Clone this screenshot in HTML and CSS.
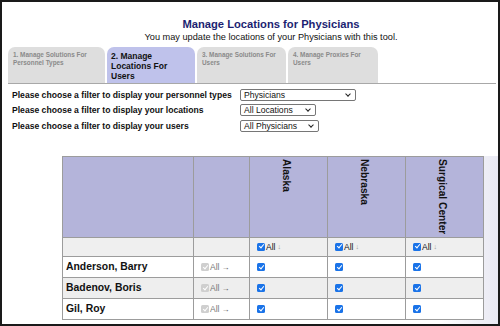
FILE: index.html
```html
<!DOCTYPE html>
<html>
<head>
<meta charset="utf-8">
<link rel="stylesheet" href="styles.css">
</head>
<body>
<div class="frame">
  <div class="header">
    <h1 class="title">Manage Locations for Physicians</h1>
    <p class="subtitle">You may update the locations of your Physicians with this tool.</p>
  </div>
  <div class="tabs">
    <div class="tab t1">1. Manage Solutions For Personnel Types</div>
    <div class="tab t2 active">2. Manage Locations For Users</div>
    <div class="tab t3">3. Manage Solutions For Users</div>
    <div class="tab t4">4. Manage Proxies For Users</div>
  </div>
  <div class="filters">
    <div class="frow"><span class="flabel">Please choose a filter to display your personnel types</span><span class="sel w1">Physicians<i class="chev"></i></span></div>
    <div class="frow"><span class="flabel">Please choose a filter to display your locations</span><span class="sel w2">All Locations<i class="chev"></i></span></div>
    <div class="frow"><span class="flabel">Please choose a filter to display your users</span><span class="sel w3">All Physicians<i class="chev"></i></span></div>
  </div>
  <div class="area">
    <table class="grid">
      <colgroup><col class="c-name"><col class="c-all"><col class="c-loc"><col class="c-loc"><col class="c-loc"></colgroup>
      <tr class="head">
        <th></th><th></th>
        <th><span class="vt">Alaska</span></th>
        <th><span class="vt">Nebraska</span></th>
        <th><span class="vt">Surgical Center</span></th>
      </tr>
      <tr class="allrow">
        <td></td><td></td>
        <td><span class="cb"></span><span class="alltxt">All</span><span class="darr">↓</span></td>
        <td><span class="cb"></span><span class="alltxt">All</span><span class="darr">↓</span></td>
        <td><span class="cb"></span><span class="alltxt">All</span><span class="darr">↓</span></td>
      </tr>
      <tr class="row odd">
        <td class="name">Anderson, Barry</td>
        <td class="rall"><span class="cb dis"></span><span class="alltxt g">All</span><span class="rarr">→</span></td>
        <td><span class="cb"></span></td><td><span class="cb"></span></td><td><span class="cb"></span></td>
      </tr>
      <tr class="row even">
        <td class="name">Badenov, Boris</td>
        <td class="rall"><span class="cb dis"></span><span class="alltxt g">All</span><span class="rarr">→</span></td>
        <td><span class="cb"></span></td><td><span class="cb"></span></td><td><span class="cb"></span></td>
      </tr>
      <tr class="row odd">
        <td class="name">Gil, Roy</td>
        <td class="rall"><span class="cb dis"></span><span class="alltxt g">All</span><span class="rarr">→</span></td>
        <td><span class="cb"></span></td><td><span class="cb"></span></td><td><span class="cb"></span></td>
      </tr>
    </table>
  </div>
</div>
</body>
</html>
```

FILE: styles.css
```css
html, body { margin: 0; padding: 0; }
body { font-family: "Liberation Sans", Arial, sans-serif; background: #fff; }
.frame {
  width: 500px; height: 326px; box-sizing: border-box;
  border: 2px solid #1a1a1a; overflow: hidden;
  background: #fff; position: relative;
}
.header { text-align: center; padding-top: 16px; margin-left: 42px; }
.title { margin: 0; font-size: 11.2px; font-weight: bold; color: #1c1f72; line-height: 13px; }
.subtitle { margin: 1px 0 0; font-size: 9.2px; color: #111; line-height: 11px; }
.tabs {
  display: flex; margin: 3.5px 2px 0 6px; height: 36px;
  border-bottom: 1px solid #a8a8a8; align-items: stretch;
}
.tab {
  background: #dedede; border-radius: 7px 7px 0 0; color: #8a8a8a;
  font-size: 6.4px; font-weight: bold; line-height: 8px; padding: 4px 4px 0 5px;
  box-sizing: border-box; margin-right: 2px;
}
.t1 { width: 97px; }
.t2 { width: 88px; }
.t3 { width: 89px; }
.t4 { width: 90px; }
.tab.active { background: #bfc2eb; color: #111; font-size: 8.5px; line-height: 10px; padding: 4px 8px 0 4px; }
.filters { margin: 3.5px 0 0 10px; }
.frow { display: flex; align-items: center; height: 15.5px; }
.flabel { width: 228px; font-size: 8.6px; font-weight: bold; color: #111; white-space: nowrap; }
.sel {
  position: relative; display: inline-block; height: 12px; box-sizing: border-box;
  border: 1px solid #767676; border-radius: 2px; font-size: 8.6px; line-height: 10px;
  padding-left: 3px; color: #111; background: #fff;
}
.w1 { width: 116px; }
.w2 { width: 76px; }
.w3 { width: 79px; }
.chev {
  position: absolute; right: 5px; top: 2px; width: 3px; height: 3px;
  border-right: 1.3px solid #222; border-bottom: 1.3px solid #222; transform: rotate(45deg);
}
.area {
  margin-top: 22px; height: 190px;
  background: linear-gradient(to right, #fff 0%, #fff 88%, #e9e9f3 100%);
  padding-left: 60px;
}
.grid { border-collapse: collapse; table-layout: fixed; width: 421px; }
.c-name { width: 131px; }
.c-all { width: 56px; }
.c-loc { width: 78px; }
.grid td, .grid th { border: 1.5px solid #9c9c9c; padding: 0; }
.head th { background: #b4b4da; height: 80px; vertical-align: top; text-align: center; line-height: 1; }
.vt {
  writing-mode: vertical-rl; font-size: 10.2px; font-weight: bold; color: #111;
  display: inline-block; vertical-align: top; padding-top: 2px; margin-right: 6px;
}
.allrow td { background: #efefef; height: 18px; padding-left: 7px; font-size: 8px; }
.row td { height: 20px; padding-left: 7px; }
.row.even td { background: #eeeeee; }
.row.odd td { background: #fff; }
.name { font-size: 10.4px; font-weight: bold; color: #111; padding-left: 3px !important; }
.cb {
  display: inline-block; width: 8px; height: 8px; border-radius: 1.5px;
  background: #1a73e8; vertical-align: middle; position: relative;
}
.cb::after {
  content: ""; position: absolute; left: 2.6px; top: 0.8px; width: 2px; height: 4px;
  border-right: 1.3px solid #fff; border-bottom: 1.3px solid #fff; transform: rotate(40deg);
}
.cb.dis { background: #cfcfcf; }
.alltxt { font-size: 8.5px; color: #111; vertical-align: middle; margin-left: 1px; }
.alltxt.g { color: #777; }
.darr { font-size: 7px; color: #999; vertical-align: middle; margin-left: 2px; }
.rarr { font-size: 8px; color: #555; vertical-align: middle; margin-left: 2px; }
.rall { padding-left: 7px !important; }
```
